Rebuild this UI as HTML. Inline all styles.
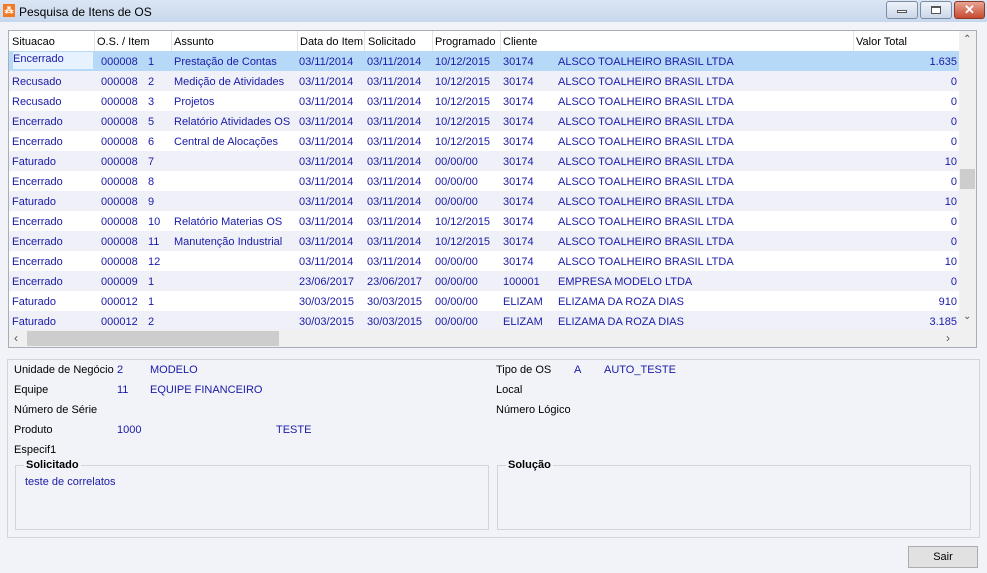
<!DOCTYPE html>
<html><head><meta charset="utf-8"><style>
*{margin:0;padding:0;box-sizing:border-box}
body{width:987px;height:573px;background:#f2f3f8;font-family:"Liberation Sans",sans-serif;font-size:11px;position:relative;overflow:hidden;color:#000}
.abs{position:absolute;white-space:nowrap}
#title{position:absolute;left:0;top:0;width:987px;height:22px;background:linear-gradient(#dbe6f4,#c7d7ec);}
.btn{position:absolute;top:1px;height:18px;border:1px solid #7d8ba3;border-radius:3px;background:linear-gradient(#eef3fa,#cbd7e8)}
#grid{position:absolute;left:8px;top:30px;width:969px;height:318px;border:1px solid #a8adb7;background:#fff;overflow:hidden}
.hdr{position:absolute;left:0;top:0;width:950px;height:20px;background:#fff}
.hdr span{position:absolute;top:5px}
.sep{position:absolute;top:0;width:1px;height:20px;background:#e3e3e8}
.row{position:absolute;left:0;width:950px;height:20px;color:#1a1aa8}
.row span{position:absolute;top:5px}
.g{background:#f0f1f8}
.sel{background:#b7d9f8}
.v{right:2px;text-align:right}
.lbl{position:absolute;white-space:nowrap}
.blue{color:#1a1aa8}
.grp{position:absolute;border:1px solid #d4d5da}
.grp b{position:absolute;top:-7px;left:8px;background:#f2f3f8;padding:0 2px;font-size:11px}
</style></head><body>
<div id="title">
 <div class="abs" style="left:3px;top:4px;width:12px;height:13px;background:#f37a25;color:#fff;font-size:9px;line-height:13px;text-align:center;font-weight:bold">⁂</div>
 <div class="abs" style="left:19px;top:5px;font-size:12px">Pesquisa de Itens de OS</div>
 <div class="btn" style="left:886px;width:32px"><div style="position:absolute;left:10px;top:8px;width:10px;height:3px;border:1px solid #555;background:#fff"></div></div>
 <div class="btn" style="left:920px;width:32px"><div style="position:absolute;left:10px;top:4px;width:10px;height:8px;border:1px solid #555;border-top-width:2px;background:#fff"></div></div>
 <div class="btn" style="left:954px;width:31px;background:linear-gradient(#e8a493,#c74a30);border-color:#8a3a2a;color:#fff;font-weight:bold;text-align:center;line-height:16px;font-size:13px">✕</div>
</div>
<div id="grid">
 <div class="hdr">
  <span style="left:3px">Situacao</span><div class="sep" style="left:85px"></div>
  <span style="left:88px">O.S. / Item</span><div class="sep" style="left:162px"></div>
  <span style="left:165px">Assunto</span><div class="sep" style="left:288px"></div>
  <span style="left:291px">Data do Item</span><div class="sep" style="left:355px"></div>
  <span style="left:359px">Solicitado</span><div class="sep" style="left:423px"></div>
  <span style="left:426px">Programado</span><div class="sep" style="left:491px"></div>
  <span style="left:494px">Cliente</span><div class="sep" style="left:844px"></div>
  <span style="left:847px">Valor Total</span>
 </div>
 <div style="position:absolute;left:0;top:20px;width:950px">
 <div class="row sel" style="top:0"><div style="position:absolute;left:4px;top:1px;width:80px;height:17px;background:#e6f2fd"></div><span style="left:4px;top:2px">Encerrado</span><span style="left:92px">000008</span><span style="left:139px">1</span><span style="left:165px">Prestação de Contas</span><span style="left:290px">03/11/2014</span><span style="left:358px">03/11/2014</span><span style="left:426px">10/12/2015</span><span style="left:494px">30174</span><span style="left:549px">ALSCO TOALHEIRO BRASIL LTDA</span><span class="v">1.635</span></div>
 <div class="row g" style="top:20px"><span style="left:3px">Recusado</span><span style="left:92px">000008</span><span style="left:139px">2</span><span style="left:165px">Medição de Atividades</span><span style="left:290px">03/11/2014</span><span style="left:358px">03/11/2014</span><span style="left:426px">10/12/2015</span><span style="left:494px">30174</span><span style="left:549px">ALSCO TOALHEIRO BRASIL LTDA</span><span class="v">0</span></div>
 <div class="row" style="top:40px"><span style="left:3px">Recusado</span><span style="left:92px">000008</span><span style="left:139px">3</span><span style="left:165px">Projetos</span><span style="left:290px">03/11/2014</span><span style="left:358px">03/11/2014</span><span style="left:426px">10/12/2015</span><span style="left:494px">30174</span><span style="left:549px">ALSCO TOALHEIRO BRASIL LTDA</span><span class="v">0</span></div>
 <div class="row g" style="top:60px"><span style="left:3px">Encerrado</span><span style="left:92px">000008</span><span style="left:139px">5</span><span style="left:165px">Relatório Atividades OS</span><span style="left:290px">03/11/2014</span><span style="left:358px">03/11/2014</span><span style="left:426px">10/12/2015</span><span style="left:494px">30174</span><span style="left:549px">ALSCO TOALHEIRO BRASIL LTDA</span><span class="v">0</span></div>
 <div class="row" style="top:80px"><span style="left:3px">Encerrado</span><span style="left:92px">000008</span><span style="left:139px">6</span><span style="left:165px">Central de Alocações</span><span style="left:290px">03/11/2014</span><span style="left:358px">03/11/2014</span><span style="left:426px">10/12/2015</span><span style="left:494px">30174</span><span style="left:549px">ALSCO TOALHEIRO BRASIL LTDA</span><span class="v">0</span></div>
 <div class="row g" style="top:100px"><span style="left:3px">Faturado</span><span style="left:92px">000008</span><span style="left:139px">7</span><span style="left:290px">03/11/2014</span><span style="left:358px">03/11/2014</span><span style="left:426px">00/00/00</span><span style="left:494px">30174</span><span style="left:549px">ALSCO TOALHEIRO BRASIL LTDA</span><span class="v">10</span></div>
 <div class="row" style="top:120px"><span style="left:3px">Encerrado</span><span style="left:92px">000008</span><span style="left:139px">8</span><span style="left:290px">03/11/2014</span><span style="left:358px">03/11/2014</span><span style="left:426px">00/00/00</span><span style="left:494px">30174</span><span style="left:549px">ALSCO TOALHEIRO BRASIL LTDA</span><span class="v">0</span></div>
 <div class="row g" style="top:140px"><span style="left:3px">Faturado</span><span style="left:92px">000008</span><span style="left:139px">9</span><span style="left:290px">03/11/2014</span><span style="left:358px">03/11/2014</span><span style="left:426px">00/00/00</span><span style="left:494px">30174</span><span style="left:549px">ALSCO TOALHEIRO BRASIL LTDA</span><span class="v">10</span></div>
 <div class="row" style="top:160px"><span style="left:3px">Encerrado</span><span style="left:92px">000008</span><span style="left:139px">10</span><span style="left:165px">Relatório Materias OS</span><span style="left:290px">03/11/2014</span><span style="left:358px">03/11/2014</span><span style="left:426px">10/12/2015</span><span style="left:494px">30174</span><span style="left:549px">ALSCO TOALHEIRO BRASIL LTDA</span><span class="v">0</span></div>
 <div class="row g" style="top:180px"><span style="left:3px">Encerrado</span><span style="left:92px">000008</span><span style="left:139px">11</span><span style="left:165px">Manutenção Industrial</span><span style="left:290px">03/11/2014</span><span style="left:358px">03/11/2014</span><span style="left:426px">10/12/2015</span><span style="left:494px">30174</span><span style="left:549px">ALSCO TOALHEIRO BRASIL LTDA</span><span class="v">0</span></div>
 <div class="row" style="top:200px"><span style="left:3px">Encerrado</span><span style="left:92px">000008</span><span style="left:139px">12</span><span style="left:290px">03/11/2014</span><span style="left:358px">03/11/2014</span><span style="left:426px">00/00/00</span><span style="left:494px">30174</span><span style="left:549px">ALSCO TOALHEIRO BRASIL LTDA</span><span class="v">10</span></div>
 <div class="row g" style="top:220px"><span style="left:3px">Encerrado</span><span style="left:92px">000009</span><span style="left:139px">1</span><span style="left:290px">23/06/2017</span><span style="left:358px">23/06/2017</span><span style="left:426px">00/00/00</span><span style="left:494px">100001</span><span style="left:549px">EMPRESA MODELO LTDA</span><span class="v">0</span></div>
 <div class="row" style="top:240px"><span style="left:3px">Faturado</span><span style="left:92px">000012</span><span style="left:139px">1</span><span style="left:290px">30/03/2015</span><span style="left:358px">30/03/2015</span><span style="left:426px">00/00/00</span><span style="left:494px">ELIZAM</span><span style="left:549px">ELIZAMA DA ROZA DIAS</span><span class="v">910</span></div>
 <div class="row g" style="top:260px"><span style="left:3px">Faturado</span><span style="left:92px">000012</span><span style="left:139px">2</span><span style="left:290px">30/03/2015</span><span style="left:358px">30/03/2015</span><span style="left:426px">00/00/00</span><span style="left:494px">ELIZAM</span><span style="left:549px">ELIZAMA DA ROZA DIAS</span><span class="v">3.185</span></div>
 </div>
 <div style="position:absolute;left:950px;top:0;width:17px;height:299px;background:#f0f0f0"></div>
 <div style="position:absolute;left:951px;top:138px;width:15px;height:20px;background:#cdcdcd"></div>
 <div class="abs" style="left:954px;top:3px;font-size:10px;color:#555">⌃</div>
 <div class="abs" style="left:954px;top:280px;font-size:10px;color:#555">⌄</div>
 <div style="position:absolute;left:0;top:299px;width:967px;height:17px;background:#f0f0f0"></div>
 <div style="position:absolute;left:18px;top:300px;width:252px;height:15px;background:#cdcdcd"></div>
 <div class="abs" style="left:5px;top:300px;font-size:12px;color:#555">‹</div>
 <div class="abs" style="left:937px;top:300px;font-size:12px;color:#555">›</div>
</div>
<div style="position:absolute;left:7px;top:359px;width:973px;height:179px;border:1px solid #d4d5da"></div>
<div class="lbl" style="left:14px;top:364px">Unidade de Negócio</div><div class="lbl blue" style="left:117px;top:364px">2</div><div class="lbl blue" style="left:150px;top:364px">MODELO</div>
<div class="lbl" style="left:14px;top:384px">Equipe</div><div class="lbl blue" style="left:117px;top:384px">11</div><div class="lbl blue" style="left:150px;top:384px">EQUIPE FINANCEIRO</div>
<div class="lbl" style="left:14px;top:404px">Número de Série</div>
<div class="lbl" style="left:14px;top:424px">Produto</div><div class="lbl blue" style="left:117px;top:424px">1000</div><div class="lbl blue" style="left:276px;top:424px">TESTE</div>
<div class="lbl" style="left:14px;top:444px">Especif1</div>
<div class="lbl" style="left:496px;top:364px">Tipo de OS</div><div class="lbl blue" style="left:574px;top:364px">A</div><div class="lbl blue" style="left:604px;top:364px">AUTO_TESTE</div>
<div class="lbl" style="left:496px;top:384px">Local</div>
<div class="lbl" style="left:496px;top:404px">Número Lógico</div>
<div class="grp" style="left:15px;top:465px;width:474px;height:65px"><b>Solicitado</b><div class="lbl blue" style="left:9px;top:10px">teste de correlatos</div></div>
<div class="grp" style="left:497px;top:465px;width:474px;height:65px"><b>Solução</b></div>
<div style="position:absolute;left:908px;top:546px;width:70px;height:22px;border:1px solid #adadad;background:#e1e1e1;text-align:center;line-height:20px">Sair</div>
</body></html>
